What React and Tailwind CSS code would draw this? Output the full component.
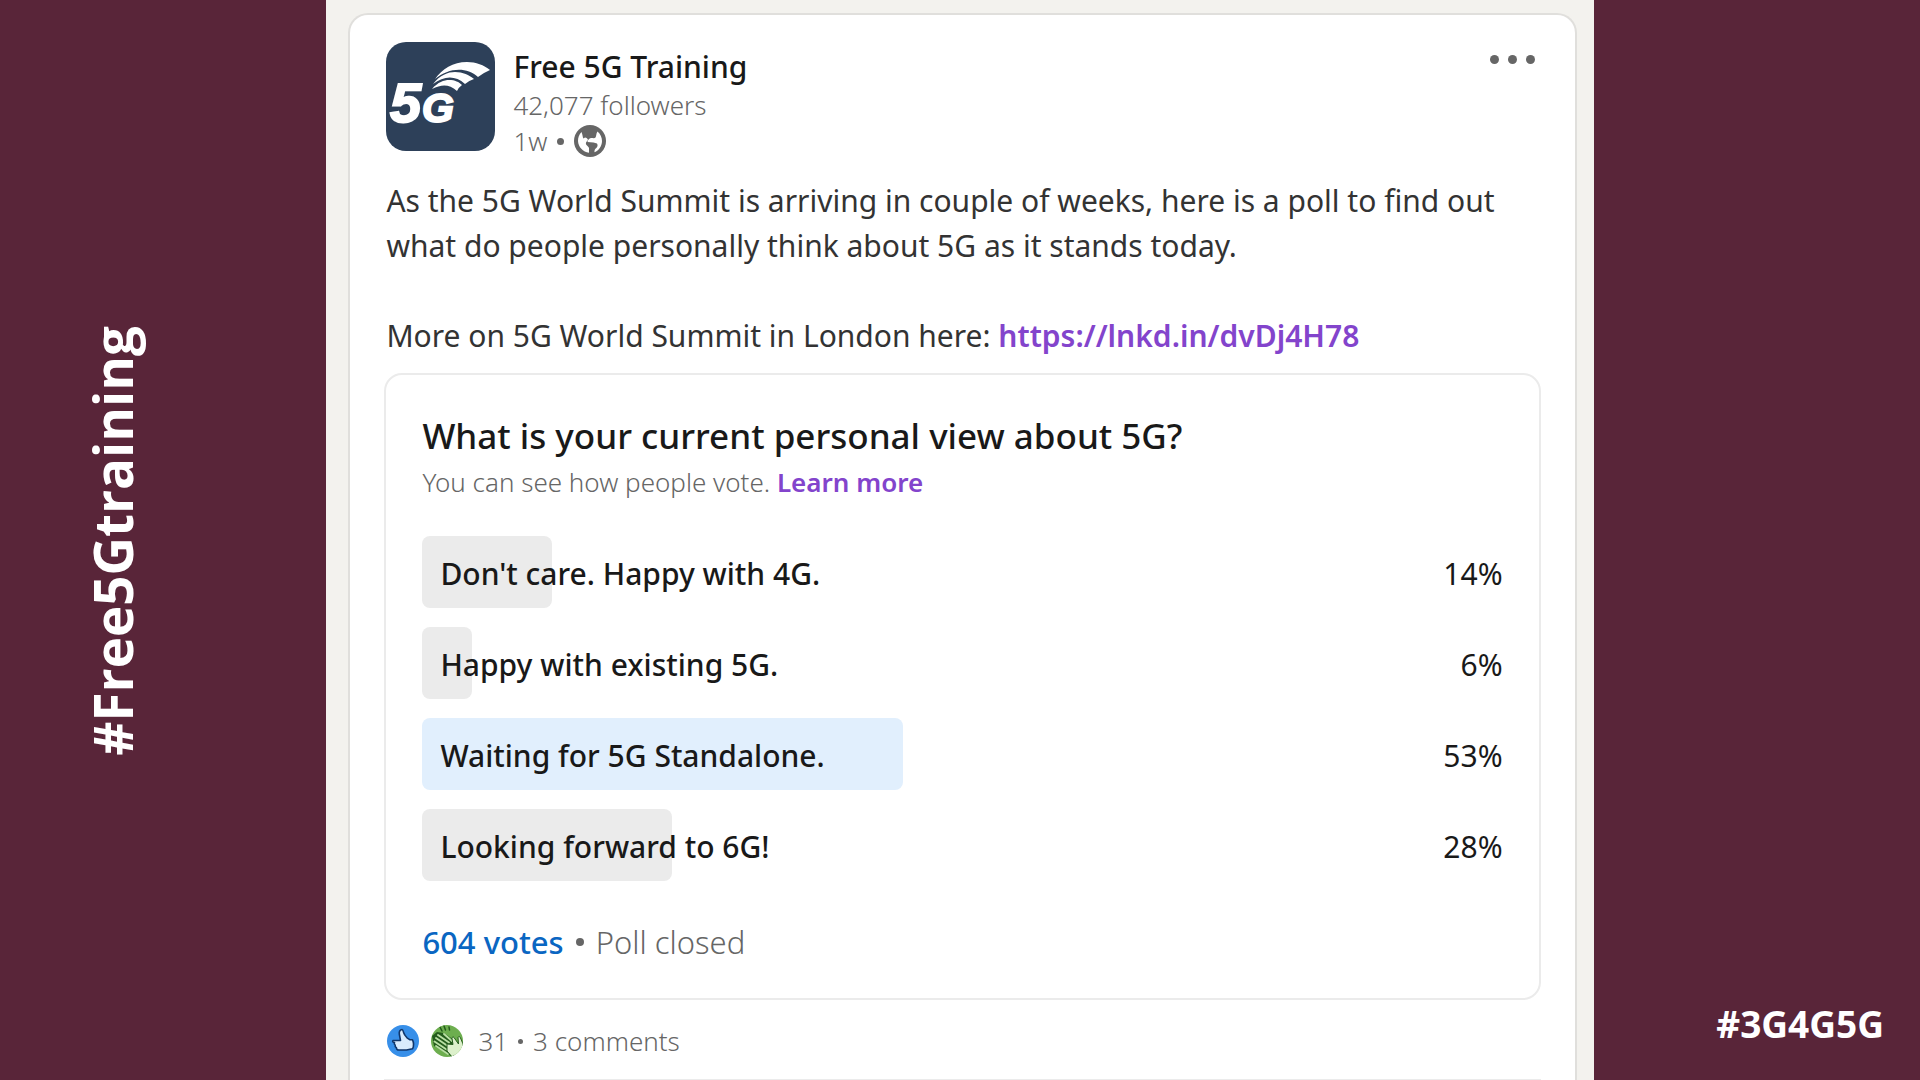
const options = [
  { label: "Don't care. Happy with 4G.", percent: 14, bar: 12 },
  { label: 'Happy with existing 5G.', percent: 6, bar: 4.6 },
  { label: 'Waiting for 5G Standalone.', percent: 53, bar: 44.5, selected: true },
  { label: 'Looking forward to 6G!', percent: 28, bar: 23.1 },
];

const Logo = () => (
  <svg viewBox="0 0 109 109" className="w-[109px] h-[109px] shrink-0" role="img" aria-label="Free 5G Training">
    <rect width="109" height="109" rx="20" fill="#2d4059" />
    <g fill="#fff" stroke="#fff" fontFamily="Liberation Sans, Arial, sans-serif" fontWeight="700" fontStyle="italic">
      <text x="4" y="80" fontSize="56" strokeWidth="2">5</text>
      <text x="36" y="80" fontSize="41" strokeWidth="2">G</text>
    </g>
    <g fill="#fff">
      <path d="M49 37C56 27 67 20 81 20C90 20 98 23 104 28Q97 31 92 35C80 24 62 26 49 37Z" />
      <path d="M47 42C54 33 62 30 69 30C77 30 83 33 88 37Q82 39 79 42C69 33 58 34 47 42Z" />
      <path d="M46 47C52 40 58 38 63 38C69 38 73 40 76 43Q73 45 71 49C63 42 56 42 46 47Z" />
    </g>
  </svg>
);

const Globe = () => (
  <svg viewBox="0 0 32 32" className="w-8 h-8" role="img" aria-label="Public">
    <circle cx="16" cy="16" r="16" fill="#666" />
    <path
      fill="#fff"
      d="M7.500 7C5 9.500 4 12.500 4 16c.3 6 5 11 11 11.800V23c-.3-1.200-1.500-2-2.500-3-.8-1-.8-2.200 0-3.200L14 15c-.5-1.500-1.500-2.500-3-2.500l-1.500 1C8.500 12.500 8.700 9.500 7.500 7z"
    />
    <path
      fill="#fff"
      d="M23.500 6.500C26.500 9 28 12.500 28 16c0 5-3 9.500-7.500 11.300-.3-1.800.5-3.300 1.800-4.300 1.400-1.200 1.700-3 .7-4.500l-3.500-1-6-.5c.3-2 1.500-3.500 3.500-4 2 0 3.500.8 4.500-.5 1-1.500.5-4 2-6z"
    />
  </svg>
);

const LikeIcon = () => (
  <svg viewBox="0 0 32 32" className="w-8 h-8" role="img" aria-label="Like">
    <circle cx="16" cy="16" r="16" fill="#378fe9" />
    <path
      d="M6 15.500h7.500l-1.200-6.500c-.4-2.600 1-4.500 2.700-4.500 1 .2 1.200 1.500 1.700 3.300.5 1.900 1.800 3.400 3.300 5l3 2h2.500c1.300 2.700 1.300 6.500 0 9l-6 1.200H12c-1.700 0-2.600-1-2.600-2.300-1-.5-1.500-1.500-1.200-2.600-1-.7-1.200-1.700-.7-2.600C5.800 17.500 5.300 16.500 6 15.500z"
      fill="#d9ebfd"
      stroke="#10366b"
      strokeWidth="1.600"
      strokeLinejoin="round"
    />
  </svg>
);

const ClapIcon = () => (
  <svg viewBox="0 0 32 32" className="w-8 h-8" role="img" aria-label="Celebrate">
    <defs>
      <clipPath id="clap-circle">
        <circle cx="16" cy="16" r="16" />
      </clipPath>
    </defs>
    <g clipPath="url(#clap-circle)">
      <rect width="32" height="32" fill="#6dae4f" />
      <path d="M1 11l5-4 7 1 10 7 1 16h-4L3 21z" fill="#245c1c" />
      <path
        d="M7 10l11 7.500M5 13l11 7.500M3.500 16.500l12 8M5 21l12 8M13 9l8 7"
        stroke="#b9dfa3"
        strokeWidth="1.900"
        strokeLinecap="round"
      />
      <path
        d="M16 19l6 .5-1-6c0-1.500 1.300-2 2-1l4.500 6.500-.5-6.500c.5-1.200 2-1 2.300 0L32 19v14H22l-6-7z"
        fill="#dcf0cb"
        stroke="#245c1c"
        strokeWidth="1"
        strokeLinejoin="round"
      />
      <path d="M9 2l2 4M13 1l1.500 4M18 2l.5 3" stroke="#245c1c" strokeWidth="1.500" strokeLinecap="round" />
    </g>
  </svg>
);

const PostHeader = () => (
  <header className="flex items-start px-[2px]">
    <Logo />
    <div className="ml-[18px] flex-1">
      <h1 className="mt-[5px] text-[30px] leading-10 font-medium text-[#191919]">Free 5G Training</h1>
      <p className="text-[26px] leading-9 font-light text-[#666]">42,077 followers</p>
      <p className="flex items-center gap-[10px] text-[26px] leading-9 font-light text-[#666]">
        <span>1w</span>
        <span className="w-[7px] h-[7px] rounded-full bg-[#666]" />
        <Globe />
      </p>
    </div>
    <button type="button" aria-label="Open menu" className="mt-[13px] mr-1 flex gap-[9px]">
      <span className="w-[9px] h-[9px] rounded-full bg-[#666]" />
      <span className="w-[9px] h-[9px] rounded-full bg-[#666]" />
      <span className="w-[9px] h-[9px] rounded-full bg-[#666]" />
    </button>
  </header>
);

const Poll = () => (
  <section className="mt-[15px] rounded-[18px] border-2 border-[#ebebeb] px-9 pt-[37px] pb-8">
    <h2 className="text-[35px] leading-[48px] font-medium text-[#191919]">
      What is your current personal view about 5G?
    </h2>
    <p className="text-[26px] leading-[44px] font-light text-[#666]">
      You can see how people vote.{' '}
      <a href="#learn-more" className="font-semibold text-[#8344cc]">Learn more</a>
    </p>
    <ul className="mt-8 flex flex-col gap-[19px]">
      {options.map((option) => (
        <li key={option.label} className="relative flex h-[72px] items-center justify-between pt-[2px] text-[30px] text-[#191919]">
          <div
            className={`absolute inset-y-0 left-0 rounded-lg ${option.selected ? 'bg-[#e1effd]' : 'bg-[#ebebeb]'}`}
            style={{ width: `${option.bar}%` }}
          />
          <span className="relative pl-[18px] font-medium">{option.label}</span>
          <span className="relative">{option.percent}%</span>
        </li>
      ))}
    </ul>
    <p className="mt-[37px] flex items-center text-[31px] leading-[48px] font-light text-[#666]">
      <a href="#votes" className="font-medium text-[#0a66c2]">604 votes</a>
      <span className="mx-3 w-2 h-2 rounded-full bg-[#666]" />
      <span>Poll closed</span>
    </p>
  </section>
);

const App = () => {
  return (
    <div className="flex min-h-screen bg-[#592539] font-['Noto_Sans','Open_Sans',sans-serif]">
      <aside className="flex w-[17%] items-center justify-center pr-[100px]">
        <p className="rotate-180 [writing-mode:vertical-rl] font-['Open_Sans',sans-serif] text-[53px] leading-[60px] font-bold text-white">
          #Free5Gtraining
        </p>
      </aside>

      <main className="flex flex-1 flex-col bg-[#f3f2ee] pl-[22px] pr-[17px] pt-[13px]">
        <article className="flex-1 rounded-t-[20px] border-2 border-b-0 border-[#e0dfdc] bg-white px-[34px] pt-[27px]">
          <PostHeader />
          <div className="mt-[19px] px-[2px] text-[30px] leading-[45px] text-[#333]">
            <p>
              As the 5G World Summit is arriving in couple of weeks, here is a poll to find out what do people
              personally think about 5G as it stands today.
            </p>
            <p className="mt-[45px]">
              More on 5G World Summit in London here:{' '}
              <a href="https://lnkd.in/dvDj4H78" className="font-semibold text-[#8344cc]">https://lnkd.in/dvDj4H78</a>
            </p>
          </div>
          <Poll />
          <footer className="mt-[19px] flex items-center border-b-2 border-[#ebebeb] px-[3px] pb-4 text-[26px] leading-[44px] font-light text-[#666]">
            <LikeIcon />
            <span className="ml-3 flex"><ClapIcon /></span>
            <span className="ml-[15px]">31</span>
            <span className="mx-[10px] w-[5px] h-[5px] rounded-full bg-[#666]" />
            <a href="#comments">3 comments</a>
          </footer>
        </article>
      </main>

      <aside className="flex w-[17%] items-end justify-end pr-9 pb-[30px]">
        <p className="font-['Open_Sans',sans-serif] text-[37px] leading-[54px] font-bold text-white">#3G4G5G</p>
      </aside>
    </div>
  );
};

export default App;
